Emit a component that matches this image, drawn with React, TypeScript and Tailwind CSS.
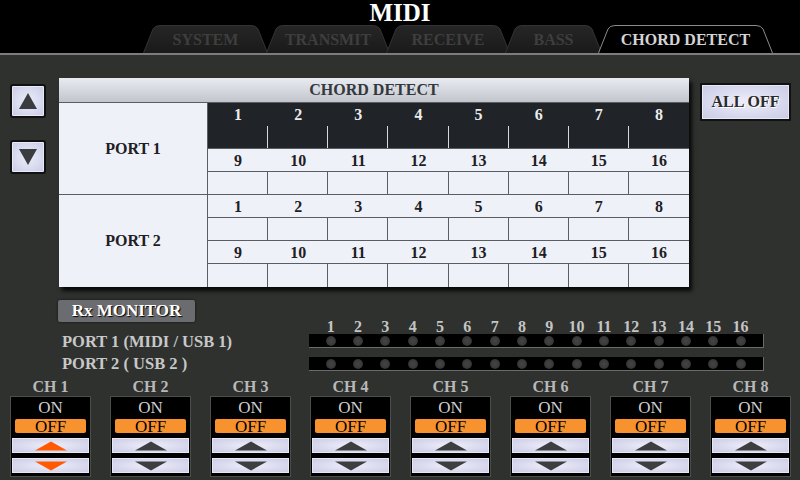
import React from "react";

const TABS: { label: string; w: number; ml: number; active?: boolean }[] = [
  { label: "SYSTEM", w: 125, ml: 143 },
  { label: "TRANSMIT", w: 124, ml: -2 },
  { label: "RECEIVE", w: 124, ml: -4 },
  { label: "BASS", w: 97, ml: -5 },
  { label: "CHORD DETECT", w: 175, ml: -4, active: true },
];

function Tab({ label, w, ml, active }: { label: string; w: number; ml: number; active?: boolean }) {
  const d = `M0.5,28 L10,4 Q12,0.5 17,0.5 L${w - 17},0.5 Q${w - 12},0.5 ${w - 10},4 L${w - 0.5},28`;
  return (
    <div className="grid h-[28px] shrink-0" style={{ width: w, marginLeft: ml }}>
      <svg width={w} height={28} className="[grid-area:1/1]">
        <defs>
          <linearGradient id={`tg-${label}`} x1="0" y1="0" x2="0" y2="1">
            <stop offset="0" stopColor={active ? "#3a3d3a" : "#262626"} />
            <stop offset="1" stopColor={active ? "#2e312e" : "#1a1a1a"} />
          </linearGradient>
        </defs>
        <path d={d + " Z"} fill={`url(#tg-${label})`} />
        <path d={d} fill="none" stroke={active ? "#8a8c8a" : "#333"} strokeWidth={1} />
      </svg>
      <span
        className={`[grid-area:1/1] z-10 flex items-center justify-center pt-[2px] text-[16px] font-bold ${
          active ? "text-[#d4d4d4]" : "text-[#3e3e3e]"
        }`}
      >
        {label}
      </span>
    </div>
  );
}

function ArrowButton({ up }: { up?: boolean }) {
  return (
    <div className="flex h-[34px] w-[36px] items-center justify-center rounded-[3px] border-2 border-[#111] bg-[radial-gradient(ellipse_at_center,#eceefa_0%,#c8cae6_100%)] shadow-[inset_0_0_0_1px_#e6e8f6]">
      <svg width="20" height="18" viewBox="0 0 20 18">
        {up ? <polygon points="10,1 19,17 1,17" fill="#3a3c40" /> : <polygon points="1,1 19,1 10,17" fill="#3a3c40" />}
      </svg>
    </div>
  );
}

function PortBlock({ name, dark }: { name: string; dark?: boolean }) {
  const nums = (start: number) => Array.from({ length: 8 }, (_, i) => start + i);
  const numRow = (start: number, isDark: boolean) => (
    <div
      className={`grid h-[23px] grid-cols-8 border-b ${
        isDark ? "border-[#202328] bg-[#202328] text-[#ececec]" : "border-[#5a5e62] bg-[#eef2f8] text-[#1e2024]"
      }`}
    >
      {nums(start).map((n) => (
        <div key={n} className="flex items-center justify-center text-[16px] font-bold">
          {n}
        </div>
      ))}
    </div>
  );
  const cellRow = (isDark: boolean, last?: boolean) => (
    <div
      className={`grid h-[23px] grid-cols-8 ${last ? "" : "border-b border-[#5a5e62]"} ${
        isDark ? "bg-[#202328]" : "bg-[#eef2f8]"
      }`}
    >
      {nums(0).map((n) => (
        <div
          key={n}
          className={n < 7 ? (isDark ? "border-r border-[#d6dae0]" : "border-r border-[#5a5e62]") : ""}
        />
      ))}
    </div>
  );
  return (
    <div className={`flex h-[92px] ${dark ? "border-b border-[#5a5e62]" : ""}`}>
      <div className="flex w-[149px] items-center justify-center border-r border-[#5a5e62] text-[16px] font-bold text-[#1e2024]">
        {name}
      </div>
      <div className="flex-1">
        {numRow(1, !!dark)}
        {cellRow(!!dark)}
        {numRow(9, false)}
        {cellRow(false, !dark)}
      </div>
    </div>
  );
}

function Dot() {
  return <div className="h-[10px] w-[10px] rounded-full bg-[radial-gradient(circle,#444_0%,#3a3a3a_55%,#1a1a1a_100%)]" />;
}

function MonitorBar() {
  return (
    <div className="flex h-[14px] w-[455px] items-center border-r border-b border-[#6a6c6a] bg-black pl-[8px]">
      {Array.from({ length: 16 }, (_, i) => (
        <div key={i} className="flex w-[27.33px] justify-center">
          <Dot />
        </div>
      ))}
    </div>
  );
}

function Channel({ n }: { n: number }) {
  const tri = n === 1 ? "#ff5a00" : "#3c3e40";
  return (
    <div className="flex w-[81px] flex-col">
      <div className="flex h-[18px] items-center justify-center text-[16px] font-bold text-[#b8b8b8]">CH {n}</div>
      <div className="flex h-[81px] flex-col border border-[#4c4e4c] bg-black px-[1px] pb-[3px]">
        <div className="flex h-[21px] items-center justify-center text-[17px] text-[#cfcfcf]">ON</div>
        <div className="mx-[3px] mt-[1px] flex h-[14px] items-center justify-center rounded-[2px] bg-[#f7922f] text-[17px] leading-none text-black">
          OFF
        </div>
        <div className="mt-[5px] flex h-[15px] items-center justify-center border border-[#e8e8f4] bg-[radial-gradient(ellipse_at_center,#eeeefa_0%,#cccce6_100%)]">
          <svg width="34" height="10" viewBox="0 0 34 10">
            <polygon points="17,0.5 33,9.5 1,9.5" fill={tri} />
          </svg>
        </div>
        <div className="mt-[5px] flex h-[15px] items-center justify-center border border-[#e8e8f4] bg-[radial-gradient(ellipse_at_center,#eeeefa_0%,#cccce6_100%)]">
          <svg width="34" height="10" viewBox="0 0 34 10">
            <polygon points="1,0.5 33,0.5 17,9.5" fill={tri} />
          </svg>
        </div>
      </div>
    </div>
  );
}

export default function App() {
  return (
    <div className="flex h-[480px] w-[800px] flex-col overflow-hidden bg-[#2e312e] font-['Liberation_Serif',serif]">
      {/* header + tabs */}
      <div className="flex h-[53px] flex-col bg-black">
        <div className="flex h-[25px] items-center justify-center text-[25px] leading-none font-bold text-white">MIDI</div>
        <div className="flex h-[28px] items-end">
          {TABS.map((t) => (
            <Tab key={t.label} {...t} />
          ))}
        </div>
      </div>
      <div className="h-[2px] bg-[#7c7e7c]" />

      {/* table area */}
      <div className="flex pt-[23px] pl-[10px]">
        <div className="flex flex-col pt-[6px]">
          <ArrowButton up />
          <div className="h-[22px]" />
          <ArrowButton />
        </div>
        <div className="ml-[13px] w-[630px] bg-[#eef2f8] shadow-[3px_4px_4px_rgba(0,0,0,0.85)]">
          <div className="flex h-[25px] items-center justify-center border-b border-[#5a5e62] bg-[linear-gradient(to_bottom,#e8ecf2,#c2c6cc)] text-[16px] font-bold text-[#34383c]">
            CHORD DETECT
          </div>
          <PortBlock name="PORT 1" dark />
          <PortBlock name="PORT 2" />
        </div>
        <div className="mt-[5px] ml-[11px] flex h-[38px] w-[91px] items-center justify-center border-2 border-[#111] bg-[radial-gradient(ellipse_at_center,#eeeefa_0%,#c8cae6_100%)] text-[16px] font-bold text-[#2a2a2a] shadow-[inset_0_0_0_1px_#e6e8f6] [text-shadow:1px_1px_0_#fff]">
          ALL OFF
        </div>
      </div>

      {/* rx monitor */}
      <div className="flex pt-[13px] pl-[58px]">
        <div className="flex w-[251px] flex-col">
          <div className="flex h-[22px] w-[137px] items-center justify-center rounded-[2px] bg-[#6a6c70] text-[17px] font-bold text-white shadow-[0_0_3px_rgba(0,0,0,0.6)] [text-shadow:1px_1px_1px_#000]">
            Rx MONITOR
          </div>
          <div className="mt-[9px] flex h-[22px] items-center pl-[4px] text-[16.5px] font-bold text-[#c8c8c8]">
            PORT 1 (MIDI / USB 1)
          </div>
          <div className="flex h-[22px] items-center pl-[4px] text-[16.5px] font-bold text-[#c8c8c8]">PORT 2 ( USB 2 )</div>
        </div>
        <div className="flex flex-col pt-[19px]">
          <div className="flex h-[15px] items-center pl-[8px]">
            {Array.from({ length: 16 }, (_, i) => (
              <div key={i} className="w-[27.33px] text-center text-[16px] leading-none font-bold text-[#c4c4c4]">
                {i + 1}
              </div>
            ))}
          </div>
          <MonitorBar />
          <div className="h-[9px]" />
          <MonitorBar />
        </div>
      </div>

      {/* channels */}
      <div className="mt-[3px] flex gap-[19px] pl-[10px]">
        {Array.from({ length: 8 }, (_, i) => (
          <Channel key={i} n={i + 1} />
        ))}
      </div>
    </div>
  );
}
